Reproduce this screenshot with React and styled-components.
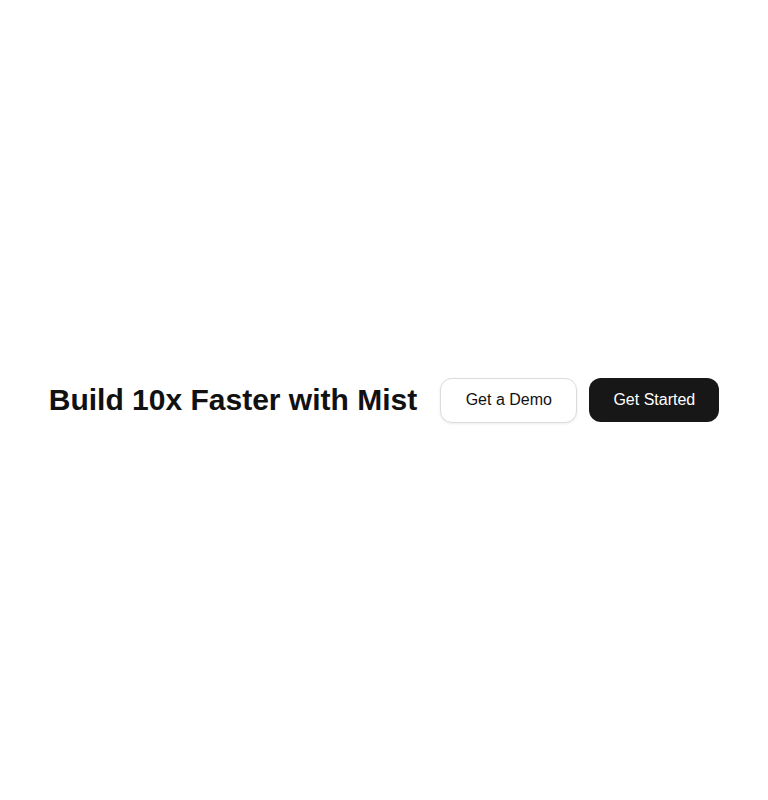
import React from "react";
import styled, { createGlobalStyle } from "styled-components";

const Global = createGlobalStyle`
  html, body { margin: 0; padding: 0; background: #ffffff; }
  body { font-family: "Liberation Sans", Arial, sans-serif; }
`;

const Page = styled.div`
  min-height: 800px;
  display: flex;
  align-items: center;
  justify-content: center;
`;

const Row = styled.div`
  display: flex;
  align-items: center;
  gap: 23px;
`;

const Title = styled.h1`
  margin: 0;
  font-size: 30px;
  font-weight: 700;
  color: #111111;
  letter-spacing: 0;
`;

const Actions = styled.div`
  display: flex;
  align-items: center;
  gap: 12px;
`;

const Button = styled.button`
  font-family: "Liberation Sans", Arial, sans-serif;
  font-size: 16px;
  height: ${(p) => (p.$primary ? "44px" : "45px")};
  padding: 0 ${(p) => (p.$primary ? "24px" : "24.5px")};
  border-radius: 12px;
  cursor: pointer;
  border: ${(p) => (p.$primary ? "none" : "1px solid #dcdcdc")};
  background: ${(p) => (p.$primary ? "#171717" : "#ffffff")};
  color: ${(p) => (p.$primary ? "#ffffff" : "#111111")};
  box-shadow: ${(p) => (p.$primary ? "none" : "0 1px 3px rgba(0,0,0,0.08)")};
`;

export default function App() {
  return (
    <>
      <Global />
      <Page>
        <Row>
          <Title>Build 10x Faster with Mist</Title>
          <Actions>
            <Button>Get a Demo</Button>
            <Button $primary>Get Started</Button>
          </Actions>
        </Row>
      </Page>
    </>
  );
}
